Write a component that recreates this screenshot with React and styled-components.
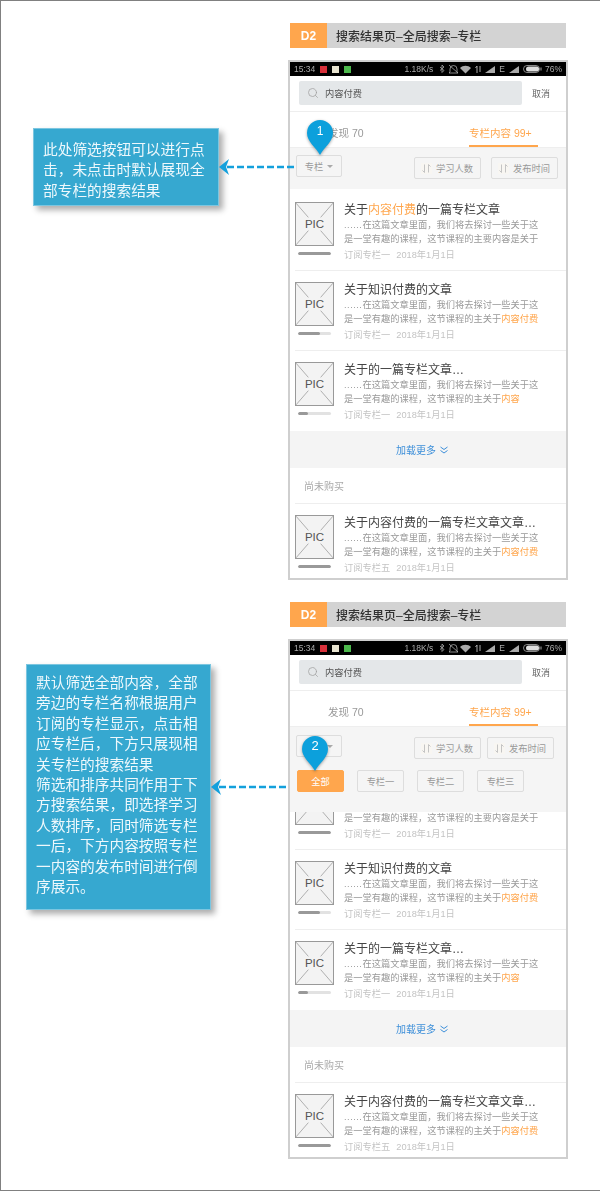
import React from "react";
import styled, { createGlobalStyle } from "styled-components";
import { Search } from "lucide-react";

const ORANGE = "#ffa64d";

const GlobalStyle = createGlobalStyle`
  html, body {
    margin: 0;
    padding: 0;
    background: #fff;
  }
  body {
    font-family: "Liberation Sans", "Noto Sans CJK SC", sans-serif;
  }
`;

const items = [
  {
    title: <>关于<Hl>内容付费</Hl>的一篇专栏文章</>,
    line: <>是一堂有趣的课程，这节课程的主要内容是关于</>,
    source: "订阅专栏一",
    progress: 100,
  },
  {
    title: "关于知识付费的文章",
    line: <>是一堂有趣的课程，这节课程的主关于<Hl>内容付费</Hl></>,
    source: "订阅专栏一",
    progress: 66,
  },
  {
    title: "关于的一篇专栏文章…",
    line: <>是一堂有趣的课程，这节课程的主关于<Hl>内容</Hl></>,
    source: "订阅专栏一",
    progress: 30,
  },
];

const lastItem = {
  title: "关于内容付费的一篇专栏文章文章…",
  line: <>是一堂有趣的课程，这节课程的主关于<Hl>内容付费</Hl></>,
  source: "订阅专栏五",
  progress: 100,
};

const note1 = ["此处筛选按钮可以进行点", "击，未点击时默认展现全", "部专栏的搜索结果"];
const note2 = [
  "默认筛选全部内容，全部",
  "旁边的专栏名称根据用户",
  "订阅的专栏显示，点击相",
  "应专栏后，下方只展现相",
  "关专栏的搜索结果",
  "筛选和排序共同作用于下",
  "方搜索结果，即选择学习",
  "人数排序，同时筛选专栏",
  "一后，下方内容按照专栏",
  "一内容的发布时间进行倒",
  "序展示。",
];

const StatusIcons = () => (
  <StatusGlyphs width="57" height="10" viewBox="0 0 57 10" fill="#aaa">
    <path d="M1 3l4 3.500L3 8.500V1l2 2L1 6.500" fill="none" stroke="#aaa" strokeWidth="0.8" />
    <path d="M11 8V5a3.500 3.500 0 0 1 7 0v3l1 1h-9zM10 1l9 8" fill="none" stroke="#aaa" strokeWidth="0.8" />
    <path d="M21 4c3-3 8-3 11 0l-5.500 5.500z" />
    <path d="M38 2v7M38 2l-1.500 2M41 8V2" fill="none" stroke="#aaa" strokeWidth="1" />
    <path d="M46 9l10-7v7z" />
  </StatusGlyphs>
);

const Signal = () => (
  <svg width="12" height="10" viewBox="0 0 12 10" fill="#aaa">
    <path d="M1 9l10-7v7z" />
  </svg>
);

const Battery = () => (
  <svg width="19" height="8" viewBox="0 0 19 8">
    <rect x="0.500" y="0.500" width="16" height="7" rx="3.500" fill="none" stroke="#aaa" strokeWidth="0.8" />
    <rect x="3" y="1.500" width="13" height="5" rx="2.500" fill="#ddd" />
    <rect x="17.500" y="2.500" width="1" height="3" fill="#aaa" />
  </svg>
);

const SortIcon = () => (
  <SortGlyph viewBox="0 0 11 11">
    <path d="M3.500 1.500v8M3.500 9.500l-2-2M7.500 9.500v-8M7.500 1.500l2 2" fill="none" stroke="#c4c4c4" strokeWidth="1" />
  </SortGlyph>
);

const Thumb = () => (
  <ThumbBox>
    <ThumbLines viewBox="0 0 39 44">
      <path d="M0 0l13 15M39 0L26 15M0 44l13-15M39 44L26 29" stroke="#999" strokeWidth="0.8" fill="none" />
    </ThumbLines>
    PIC
  </ThumbBox>
);

const Item = ({ data, bordered, short }) => (
  <ItemRow $bordered={bordered} $short={short}>
    <Side>
      <Thumb />
      <Bar>
        <BarFill style={{ width: data.progress + "%" }} />
      </Bar>
    </Side>
    <Body>
      <Title>{data.title}</Title>
      <Desc><Dots>......</Dots>在这篇文章里面，我们将去探讨一些关于这</Desc>
      <Desc>{data.line}</Desc>
      <Meta>
        <span>{data.source}</span>
        <span>2018年1月1日</span>
      </Meta>
    </Body>
  </ItemRow>
);

const Phone = ({ open, pin }) => (
  <PhoneFrame>
    <StatusBar>
      <StatusLeft>
        15:34
        <Dot $color="#d8303a" />
        <Dot $color="#e8e4d0" />
        <Dot $color="#4cb84c" />
      </StatusLeft>
      <StatusRight>
        1.18K/s
        <StatusIcons />
        E
        <Signal />
        <Battery />
        76%
      </StatusRight>
    </StatusBar>
    <SearchRow>
      <SearchBox>
        <Search size={12} color="#a0a0a0" strokeWidth={1.5} />
        内容付费
      </SearchBox>
      <Cancel>取消</Cancel>
    </SearchRow>
    <Tabs>
      <Tab>发现 70</Tab>
      <Tab $active>专栏内容 99+</Tab>
    </Tabs>
    <FilterSlot>
      <FilterPanel $open={open}>
        <FilterRow $open={open}>
          <DropButton>
            专栏
            <Caret />
          </DropButton>
          <SortGroup $open={open}>
            <SortButton><SortIcon />学习人数</SortButton>
            <SortButton><SortIcon />发布时间</SortButton>
          </SortGroup>
        </FilterRow>
        {open && (
          <Chips>
            <Chip $active>全部</Chip>
            <Chip>专栏一</Chip>
            <Chip>专栏二</Chip>
            <Chip>专栏三</Chip>
          </Chips>
        )}
      </FilterPanel>
    </FilterSlot>
    <List>
      {items.map((item, i) => (
        <Item key={i} data={item} bordered={i < items.length - 1} />
      ))}
    </List>
    <LoadMore>
      加载更多
      <svg width="8" height="8" viewBox="0 0 8 8" fill="none" stroke="#3d8fd9" strokeWidth="1">
        <path d="M.5 1L4 3.500 7.500 1M.5 4.500L4 7l3.500-2.500" />
      </svg>
    </LoadMore>
    <Unbought>尚未购买</Unbought>
    <Item data={lastItem} short />
    <Pin $open={open}>
      <svg width="28" height="36" viewBox="0 0 28 36">
        <path d="M14 36C10 28 1 23 1 14a13 13 0 1 1 26 0C27 23 18 28 14 36z" fill="#0ca0dc" />
      </svg>
      <PinNumber $open={open}>{pin}</PinNumber>
    </Pin>
  </PhoneFrame>
);

const Section = ({ lines, open, pin, left, top, width, pad }) => (
  <SectionRow>
    <NoteColumn>
      <NoteRow $left={left} $top={top}>
        <Note $width={width} $pad={pad}>
          {lines.map((line, i) => (
            <div key={i}>{line}</div>
          ))}
        </Note>
        <svg width="78" height="16" viewBox="0 0 78 16">
          <path d="M0 8L10 0 7 8l3 8z" fill="#13a0dc" />
          <line x1="8" y1="8" x2="78" y2="8" stroke="#13a0dc" strokeWidth="2.500" strokeDasharray="7 3" />
        </svg>
      </NoteRow>
    </NoteColumn>
    <PhoneColumn>
      <Header>
        <Badge>D2</Badge>
        <HeaderTitle>搜索结果页–全局搜索–专栏</HeaderTitle>
      </Header>
      <Phone open={open} pin={pin} />
    </PhoneColumn>
  </SectionRow>
);

export default function App() {
  return (
    <Page>
      <GlobalStyle />
      <Section lines={note1} pin={1} left={32} top={105} width={186} pad="11px 6px 4px 9px" />
      <Section lines={note2} pin={2} open left={25} top={62} width={185} pad="8px 6px 12px 9px" />
    </Page>
  );
}

function Hl({ children }) {
  return <HlText>{children}</HlText>;
}

const HlText = styled.span`
  color: ${ORANGE};
`;

const Page = styled.div`
  box-sizing: border-box;
  width: 600px;
  height: 1191px;
  padding-top: 22px;
  border-left: 1px solid #808080;
  border-top: 1px solid #808080;
  border-bottom: 1px solid #808080;
  display: flex;
  flex-direction: column;
  gap: 22px;
  overflow: hidden;
  filter: blur(0.5px);
`;

const SectionRow = styled.section`
  display: flex;
  align-items: flex-start;
`;

const NoteColumn = styled.div`
  width: 287px;
  flex: none;
  position: relative;
  z-index: 3;
`;

const NoteRow = styled.div`
  display: flex;
  align-items: center;
  margin-left: ${(p) => p.$left}px;
  margin-top: ${(p) => p.$top}px;

  svg {
    flex: none;
  }
`;

const Note = styled.div`
  box-sizing: border-box;
  flex: none;
  width: ${(p) => p.$width}px;
  padding: ${(p) => p.$pad};
  background: #36a8d0;
  border: 1px solid #7cc6e0;
  box-shadow: 4px 4px 6px rgba(0, 0, 0, 0.32);
  color: #eef8fc;
  font-size: 14.7px;
  line-height: 20.4px;
  white-space: nowrap;
`;

const PhoneColumn = styled.div`
  width: 280px;
  flex: none;
  display: flex;
  flex-direction: column;
  gap: 12px;
`;

const Header = styled.header`
  display: flex;
  align-items: center;
  height: 25px;
  margin: 0 2px;
  background: #d3d3d3;
`;

const Badge = styled.div`
  width: 37px;
  height: 100%;
  display: flex;
  align-items: center;
  justify-content: center;
  background: ${ORANGE};
  color: #fff;
  font-size: 12px;
  font-weight: 700;
`;

const HeaderTitle = styled.div`
  margin-left: 9px;
  font-size: 12px;
  font-weight: 500;
  color: #333;
`;

const PhoneFrame = styled.div`
  box-sizing: border-box;
  position: relative;
  width: 280px;
  height: 520px;
  border: 2px solid #cfcfcf;
  background: #fff;
  overflow: hidden;
`;

const StatusBar = styled.div`
  height: 14px;
  padding: 0 4px;
  display: flex;
  align-items: center;
  justify-content: space-between;
  background: #000;
  color: #aaa;
  font-size: 8.5px;
`;

const StatusLeft = styled.div`
  display: flex;
  align-items: center;
  gap: 5px;
`;

const StatusRight = styled.div`
  display: flex;
  align-items: center;
  gap: 3px;
`;

const StatusGlyphs = styled.svg`
  margin-left: 3px;
`;

const Dot = styled.span`
  width: 7px;
  height: 7px;
  background: ${(p) => p.$color};
`;

const SearchRow = styled.div`
  box-sizing: border-box;
  height: 36px;
  padding: 5px 16px 6px 9px;
  display: flex;
  align-items: center;
  justify-content: space-between;
  border-bottom: 1px solid #eee;
`;

const SearchBox = styled.div`
  box-sizing: border-box;
  width: 223px;
  height: 24px;
  padding-left: 8px;
  display: flex;
  align-items: center;
  gap: 6px;
  border-radius: 2px;
  background: #e4e7e9;
  color: #555;
  font-size: 9.25px;
`;

const Cancel = styled.div`
  font-size: 9px;
  color: #666;
`;

const Tabs = styled.div`
  box-sizing: border-box;
  height: 35px;
  padding-left: 38px;
  display: flex;
  gap: 106px;
`;

const Tab = styled.div`
  box-sizing: border-box;
  width: ${(p) => (p.$active ? "69px" : "35px")};
  height: 100%;
  padding-top: 13px;
  font-size: 10.5px;
  white-space: nowrap;
  color: ${(p) => (p.$active ? ORANGE : "#999")};
  border-bottom: 2px solid ${(p) => (p.$active ? ORANGE : "transparent")};
`;

const FilterSlot = styled.div`
  position: relative;
  height: 42px;
`;

const FilterPanel = styled.div`
  position: ${(p) => (p.$open ? "absolute" : "static")};
  z-index: 1;
  top: 0;
  left: 0;
  right: 0;
  box-sizing: border-box;
  height: ${(p) => (p.$open ? "86px" : "42px")};
  background: #f5f5f5;
  border-top: 1px solid #eee;
`;

const FilterRow = styled.div`
  display: flex;
  align-items: flex-start;
  justify-content: space-between;
  padding: ${(p) => (p.$open ? "8px 12px 0 6px" : "7px 8px 0 6px")};
`;

const DropButton = styled.div`
  box-sizing: border-box;
  width: 46px;
  height: 22px;
  display: flex;
  align-items: center;
  justify-content: center;
  gap: 4px;
  border: 1px solid #ddd;
  border-radius: 2px;
  color: #999;
  font-size: 9.25px;
`;

const Caret = styled.span`
  width: 0;
  height: 0;
  border-left: 3px solid transparent;
  border-right: 3px solid transparent;
  border-top: 3px solid #aaa;
`;

const SortGroup = styled.div`
  margin-top: 2px;
  display: flex;
  gap: ${(p) => (p.$open ? "6px" : "10px")};
`;

const SortButton = styled.div`
  box-sizing: border-box;
  width: 67px;
  height: 22px;
  padding-left: 6px;
  display: flex;
  align-items: center;
  gap: 4px;
  border: 1px solid #ddd;
  border-radius: 2px;
  color: #999;
  font-size: 9.25px;
`;

const SortGlyph = styled.svg`
  width: 11px;
  height: 11px;
  background: #f8f6f2;
`;

const Chips = styled.div`
  margin-top: 11px;
  padding-left: 7px;
  display: flex;
  gap: 13px;
`;

const Chip = styled.div`
  box-sizing: border-box;
  width: 47px;
  height: 22px;
  display: flex;
  align-items: center;
  justify-content: center;
  border: 1px solid ${(p) => (p.$active ? ORANGE : "#ddd")};
  border-radius: 2px;
  background: ${(p) => (p.$active ? ORANGE : "transparent")};
  color: ${(p) => (p.$active ? "#fff" : "#999")};
  font-size: 9.25px;
`;

const List = styled.div`
  padding-top: 2px;
`;

const ItemRow = styled.div`
  box-sizing: border-box;
  height: ${(p) => (p.$short ? "75px" : "80px")};
  margin-left: 5px;
  padding-top: 11px;
  display: flex;
  gap: 10px;
  border-bottom: ${(p) => (p.$bordered ? "1px solid #eee" : "none")};
`;

const Side = styled.div`
  width: 39px;
  flex: none;
`;

const ThumbBox = styled.div`
  box-sizing: border-box;
  position: relative;
  width: 39px;
  height: 44px;
  display: flex;
  align-items: center;
  justify-content: center;
  border: 1px solid #999;
  background: #f3f3f3;
  color: #555;
  font-size: 11.5px;
`;

const ThumbLines = styled.svg`
  position: absolute;
  inset: 0;
  width: 100%;
  height: 100%;
`;

const Bar = styled.div`
  width: 33px;
  height: 3px;
  margin: 6px 0 0 3px;
  border-radius: 2px;
  background: #e2e2e2;
  overflow: hidden;
`;

const BarFill = styled.div`
  height: 100%;
  border-radius: 2px;
  background: #999;
`;

const Body = styled.div`
  flex: 1;
  margin-top: 1px;
`;

const Title = styled.div`
  height: 15px;
  margin-bottom: 1px;
  font-size: 12px;
  line-height: 15px;
  color: #444;
  white-space: nowrap;
`;

const Desc = styled.div`
  font-size: 9.25px;
  line-height: 13.5px;
  color: #999;
  white-space: nowrap;
`;

const Dots = styled.span`
  letter-spacing: 0.5px;
`;

const Meta = styled.div`
  margin-top: 3px;
  display: flex;
  gap: 6px;
  font-size: 9.25px;
  line-height: 13px;
  color: #c4c4c4;
`;

const LoadMore = styled.div`
  height: 37px;
  padding-right: 12px;
  display: flex;
  align-items: center;
  justify-content: center;
  gap: 4px;
  background: #f4f4f4;
  color: #3d8fd9;
  font-size: 10px;
`;

const Unbought = styled.div`
  box-sizing: border-box;
  height: 36px;
  margin-left: 5px;
  padding: 10px 0 0 9px;
  border-bottom: 1px solid #eee;
  color: #aaa;
  font-size: 10px;
`;

const Pin = styled.div`
  position: absolute;
  z-index: 2;
  left: ${(p) => (p.$open ? "11px" : "16px")};
  top: ${(p) => (p.$open ? "94px" : "57px")};
  width: 28px;
  height: 36px;
  filter: drop-shadow(0 1px 1.5px rgba(0, 0, 0, 0.35));
`;

const PinNumber = styled.span`
  position: absolute;
  top: ${(p) => (p.$open ? "3px" : "5px")};
  left: 0;
  width: 100%;
  text-align: center;
  color: #fff;
  font-size: ${(p) => (p.$open ? "13px" : "12px")};
`;
